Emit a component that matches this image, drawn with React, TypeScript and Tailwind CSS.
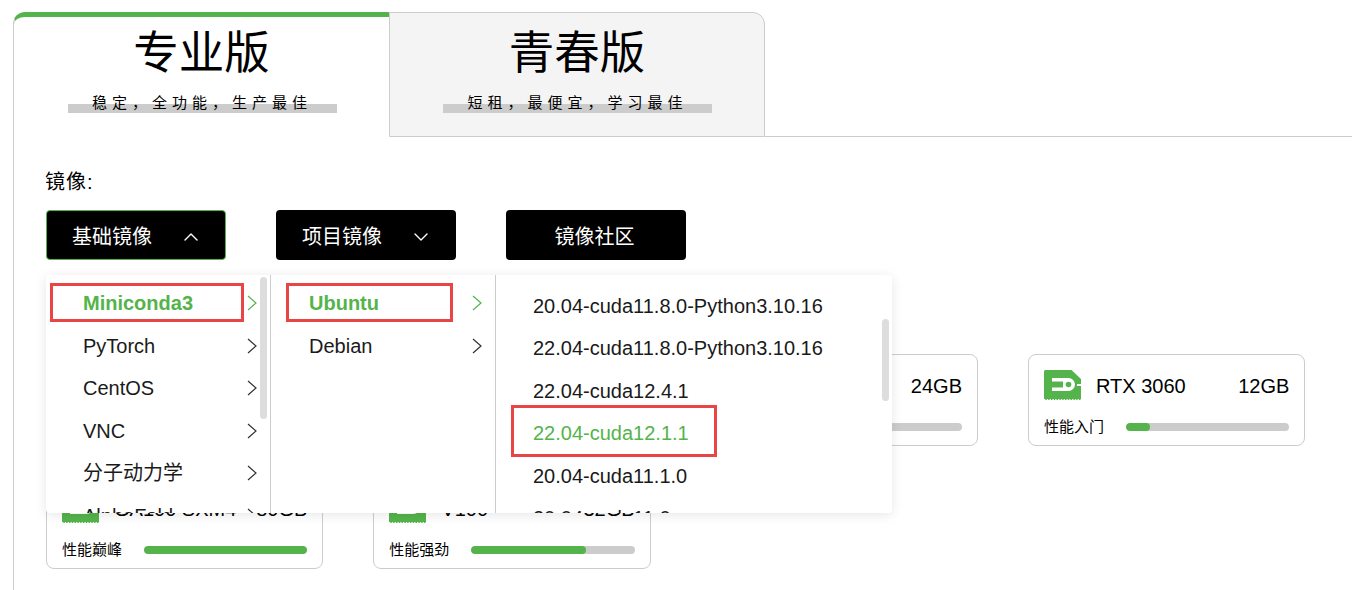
import { ChevronDown, ChevronUp } from "lucide-react";

const GREEN = "#54b44b";

type Card = { name: string; mem: string; label: string; pct: number };

const cards: Card[] = [
  { name: "RTX 4090", mem: "24GB", label: "性能巅峰", pct: 100 },
  { name: "RTX 3090", mem: "24GB", label: "性能强劲", pct: 50 },
  { name: "RTX 3090", mem: "24GB", label: "性能强劲", pct: 50 },
  { name: "RTX 3060", mem: "12GB", label: "性能入门", pct: 15 },
  { name: "GA100 SXM4", mem: "80GB", label: "性能巅峰", pct: 100 },
  { name: "V100", mem: "32GB", label: "性能强劲", pct: 70 },
];

const firstCol = ["Miniconda3", "PyTorch", "CentOS", "VNC", "分子动力学", "AlphaFold"];
const secondCol = ["Ubuntu", "Debian"];
const versions = [
  "20.04-cuda11.8.0-Python3.10.16",
  "22.04-cuda11.8.0-Python3.10.16",
  "22.04-cuda12.4.1",
  "22.04-cuda12.1.1",
  "20.04-cuda11.1.0",
  "20.04-cuda11.0",
];

function GpuIcon() {
  return (
    <svg width="37" height="31" viewBox="0 0 37 31" className="shrink-0">
      <path d="M1.5 0H27.5L37 9V30H1.5A1.5 1.5 0 0 1 0 28.5V1.5A1.5 1.5 0 0 1 1.5 0Z" fill={GREEN} />
      <path d="M8 8H24.5A6.5 6.5 0 0 1 24.5 21H8V17.5H19V11.5H8Z" fill="#fff" />
      <circle cx="24.5" cy="14.5" r="2.8" fill={GREEN} />
      <rect x="33" y="14" width="4" height="2" fill="#fff" />
      <line x1="0" y1="29.6" x2="37" y2="29.6" stroke="#fff" strokeWidth="1" strokeDasharray="1.4 1.4" />
    </svg>
  );
}

function Chevron({ active }: { active?: boolean }) {
  return (
    <svg width="10" height="16" viewBox="0 0 10 16" fill="none" className="shrink-0">
      <path d="M1 1L9 8L1 15" stroke={active ? GREEN : "#303133"} strokeWidth="1.2" />
    </svg>
  );
}

function GpuCard({ card }: { card: Card }) {
  return (
    <div className="h-[92px] rounded-lg border border-[#ccc] px-[15px] pt-[15px]">
      <div className="flex h-[31px] items-center">
        <GpuIcon />
        <span className="ml-[15px] flex-1 text-[20px]">{card.name}</span>
        <span className="text-[20px]">{card.mem}</span>
      </div>
      <div className="mt-[16px] flex h-[20px] items-center">
        <span className="-mt-px w-[82px] text-[15px] leading-[20px]">{card.label}</span>
        <div className="h-2 flex-1 overflow-hidden rounded bg-[#ccc]">
          <div className="h-full rounded bg-[#54b44b]" style={{ width: `${card.pct}%` }} />
        </div>
      </div>
    </div>
  );
}

function ImageMenu() {
  return (
    <div className="absolute left-0 top-[65px] z-10 flex h-[238px] w-[846px] overflow-hidden rounded bg-white text-[20px] text-[#1a1a1a] shadow-[0_2px_12px_0_rgba(0,0,0,0.1)]">
      <div className="relative h-full w-[225px] shrink-0 border-r border-[#ccc] pt-[7px]">
        {firstCol.map((item, i) => (
          <div key={item} className="flex h-[42.5px] items-center justify-between pl-[37px] pr-[13px]">
            <span className={i === 0 ? "font-bold text-[#54b44b]" : ""}>{item}</span>
            <Chevron active={i === 0} />
          </div>
        ))}
        <div className="absolute right-[3px] top-[2px] h-[142px] w-[7px] rounded bg-[#ddd]" />
        <div className="absolute left-[4px] top-[8px] h-[39px] w-[194px] border-[3px] border-[#e94545]" />
      </div>
      <div className="relative h-full w-[225px] shrink-0 border-r border-[#ccc] pt-[7px]">
        {secondCol.map((item, i) => (
          <div key={item} className="flex h-[42.5px] items-center justify-between pl-[38px] pr-[13px]">
            <span className={i === 0 ? "font-bold text-[#54b44b]" : ""}>{item}</span>
            <Chevron active={i === 0} />
          </div>
        ))}
        <div className="absolute left-[15px] top-[8px] h-[39px] w-[167px] border-[3px] border-[#e94545]" />
      </div>
      <div className="relative h-full flex-1 pl-[37px] pt-[9.5px]">
        {versions.map((v, i) => (
          <div key={v} className={`flex h-[42.5px] items-center ${i === 3 ? "text-[#54b44b]" : ""}`}>
            {v}
          </div>
        ))}
        <div className="absolute right-[3px] top-[44px] h-[82px] w-[7px] rounded bg-[#ddd]" />
        <div className="absolute left-[15px] top-[130px] h-[52px] w-[206px] border-[3px] border-[#e94545]" />
      </div>
    </div>
  );
}

function Tab({ title, sub, active }: { title: string; sub: string; active?: boolean }) {
  return (
    <div
      className={
        active
          ? "flex h-[125px] w-[376px] shrink-0 flex-col items-center rounded-tl-[12px] border-l border-t-[5px] border-l-[#ccc] border-t-[#54b44b] pt-[7px]"
          : "flex h-[125px] w-[376px] shrink-0 flex-col items-center rounded-tr-[12px] border border-l border-[#ccc] bg-[#f4f4f4] pt-[11px]"
      }
    >
      <div className="h-[60px] text-[45.5px] leading-[60px]">{title}</div>
      <div className="relative ml-px mt-[9px] h-[20px] w-[269px] text-center text-[15px] leading-[20px] tracking-[5px]">
        <div className="absolute inset-x-0 bottom-0 h-[9px] bg-[#ccc]" />
        <span className="relative">{sub}</span>
      </div>
    </div>
  );
}

export default function App() {
  return (
    <div className="h-[590px] w-[1352px] overflow-hidden bg-white pl-[13px] pt-3 font-['Liberation_Sans','Noto_Sans_CJK_SC',sans-serif] text-black">
      <div className="flex h-[125px]">
        <Tab title="专业版" sub="稳定，全功能，生产最佳" active />
        <Tab title="青春版" sub="短租，最便宜，学习最佳" />
        <div className="flex-1 border-b border-[#ccc]" />
      </div>

      <div className="h-[453px] border-l border-[#ccc] pl-[32px] pt-[29px]">
        <div className="-ml-px h-[30px] pt-px text-[20px] leading-[30px] tracking-[1px]">镜像:</div>
        <div className="relative mt-[14px] flex gap-[50px] text-[20px] text-white">
          <button className="flex h-[50px] w-[180px] items-center rounded border border-[#54b44b] bg-black pl-[25px] pt-[3px]">
            基础镜像
            <ChevronUp size={24} strokeWidth={1.4} className="ml-[27px]" />
          </button>
          <button className="flex h-[50px] w-[180px] items-center rounded bg-black pl-[26px] pt-[3px]">
            项目镜像
            <ChevronDown size={24} strokeWidth={1.4} className="ml-[27px]" />
          </button>
          <button className="flex h-[50px] w-[180px] items-center justify-center rounded bg-black pr-[3px] pt-[3px]">镜像社区</button>
          <ImageMenu />
        </div>
        <div className="mt-[94px] grid w-[1260px] grid-cols-[repeat(4,277.33px)] gap-x-[50px] gap-y-[31px]">
          {cards.map((c, i) => (
            <GpuCard key={i} card={c} />
          ))}
        </div>
      </div>
    </div>
  );
}
